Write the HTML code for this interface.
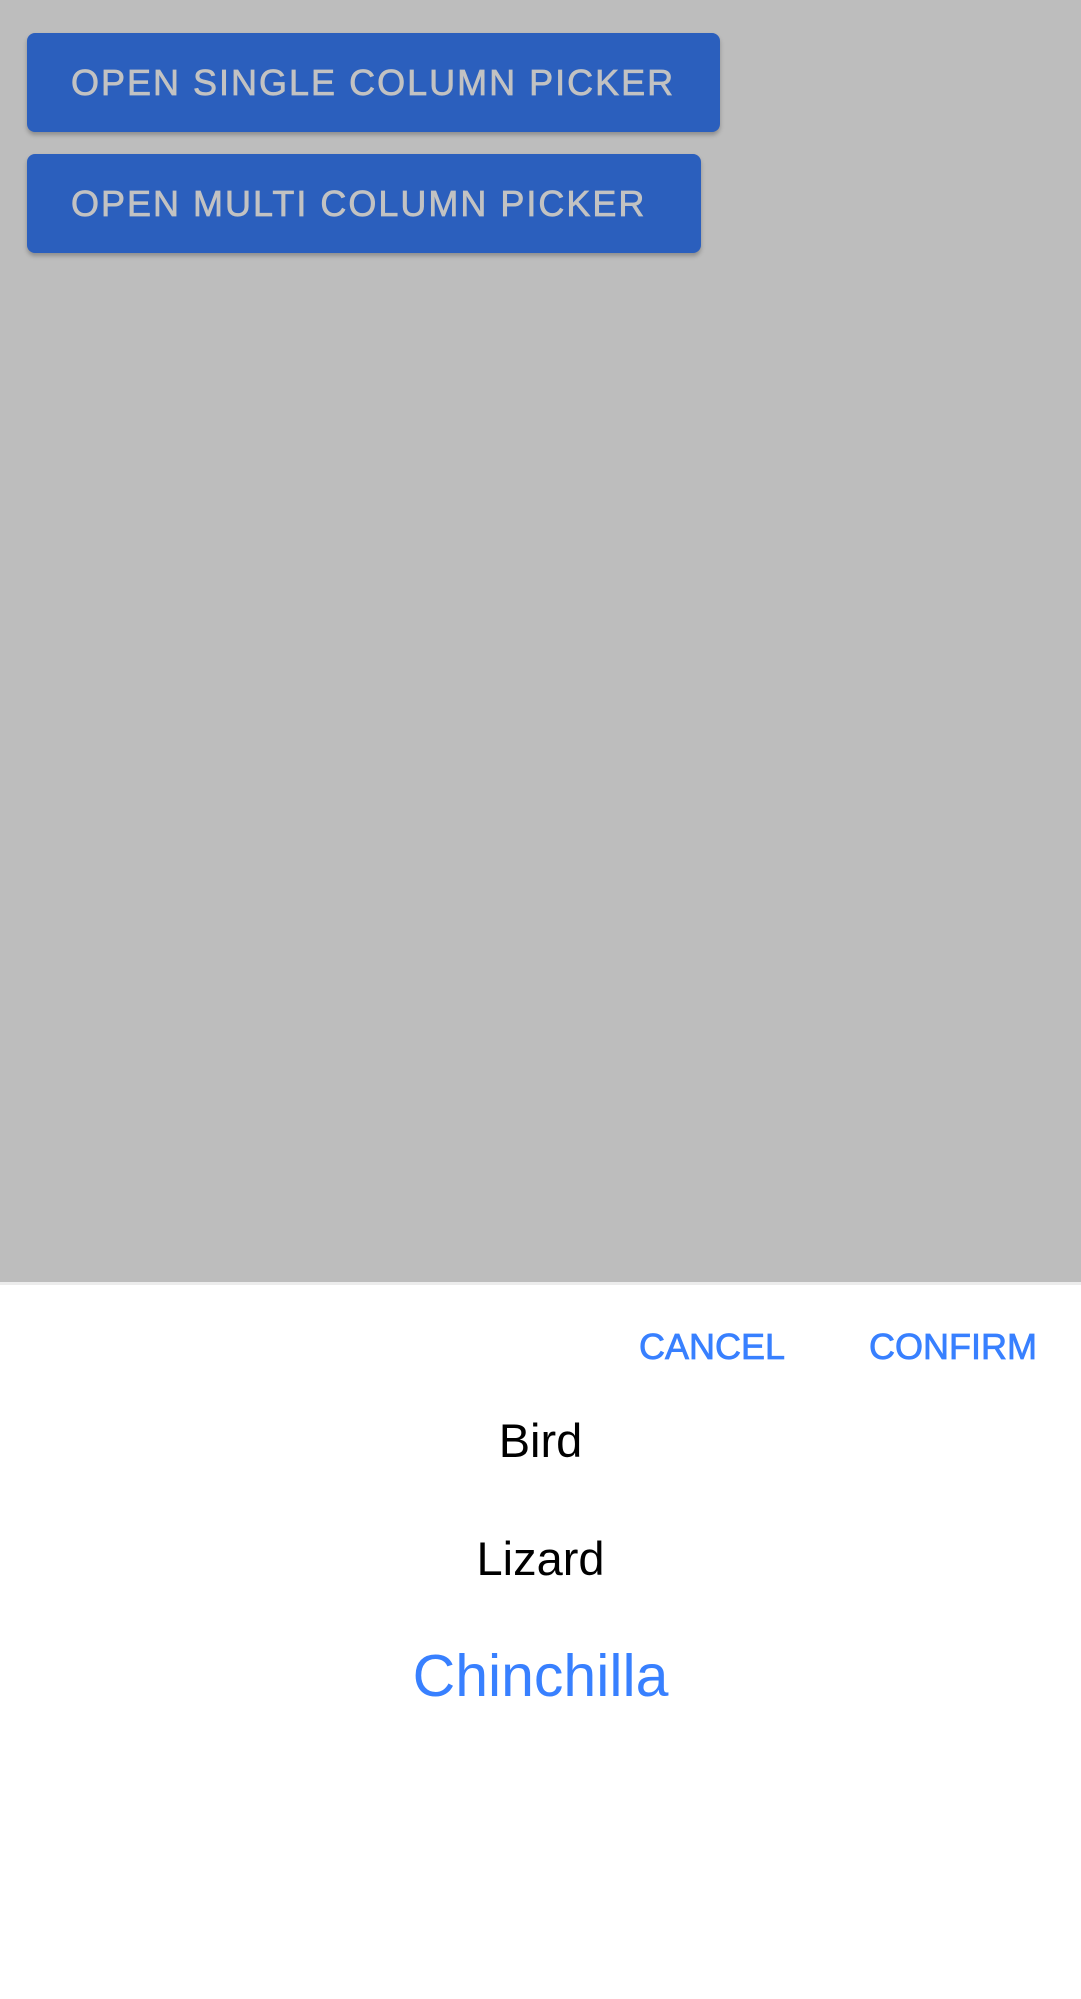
<!DOCTYPE html>
<html><head><meta charset="utf-8"><style>
html,body{margin:0;padding:0}
body{width:1081px;height:1999px;position:relative;overflow:hidden;background:#fff;font-family:"Liberation Sans",sans-serif}
.bg{position:absolute;left:0;top:0;width:1081px;height:1282px;background:#bdbdbd}
.line{position:absolute;left:0;top:1282px;width:1081px;height:3px;background:#ececec}
.btn{position:absolute;left:27px;height:99px;background:#2b5fbd;border-radius:8px;box-shadow:0 3px 4px rgba(0,0,0,0.25)}
.bt{position:absolute;left:71px;font-size:36px;line-height:36px;letter-spacing:2px;color:#c2c2c2;white-space:nowrap;-webkit-text-stroke:0.7px #c2c2c2}
.t{position:absolute;white-space:nowrap;line-height:1}
.a{-webkit-text-stroke:0.8px #3880ff}
</style></head><body>
<div class="bg"></div>
<div class="line"></div>
<div class="btn" style="top:33px;width:693px"></div>
<div class="bt" style="top:65px">OPEN SINGLE COLUMN PICKER</div>
<div class="btn" style="top:154px;width:674px"></div>
<div class="bt" style="top:186px">OPEN MULTI COLUMN PICKER</div>
<div class="t a" style="left:639px;top:1329px;font-size:36px;color:#3880ff">CANCEL</div>
<div class="t a" style="left:869px;top:1329px;font-size:36px;color:#3880ff">CONFIRM</div>
<div class="t" style="left:0;width:1081px;text-align:center;top:1417px;font-size:47px;color:#000">Bird</div>
<div class="t" style="left:0;width:1081px;text-align:center;top:1535px;font-size:47px;color:#000">Lizard</div>
<div class="t" style="left:0;width:1081px;text-align:center;top:1647px;font-size:59px;color:#3880ff">Chinchilla</div>
</body></html>
